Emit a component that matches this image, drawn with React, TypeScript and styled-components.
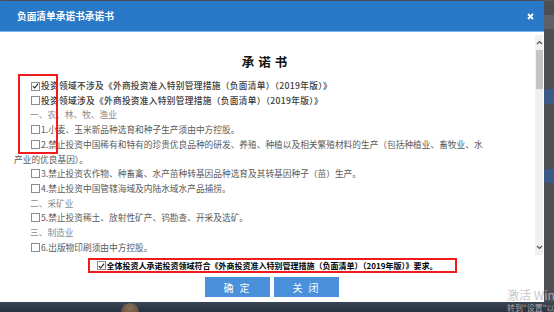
import React from 'react';
import styled, { createGlobalStyle } from 'styled-components';

const Global = createGlobalStyle`
  html, body { margin: 0; padding: 0; width: 554px; height: 312px; overflow: hidden; background: #4a4c50; }
  body { font-family: "Noto Sans CJK SC", "Noto Sans", sans-serif; }
  * { box-sizing: border-box; }
`;

const Screen = styled.div`
  position: relative;
  width: 554px;
  height: 312px;
  display: flex;
  flex-direction: column;
  overflow: hidden;
  background: #4a4c50;
`;

const TopEdge = styled.div`
  height: 1px;
  background: #5b5d61;
`;

const Middle = styled.div`
  display: flex;
  height: 301px;
`;

const Dialog = styled.div`
  width: 544px;
  display: flex;
  flex-direction: column;
  background: #ffffff;
  box-shadow: 0 0 4px rgba(0, 0, 0, 0.4);
`;

const Header = styled.div`
  height: 31px;
  flex: none;
  display: flex;
  align-items: center;
  justify-content: space-between;
  padding: 0 10px 0 17px;
  background: #2a79c9;
  border-bottom: 1px solid #7ab2ea;
`;

const Title = styled.div`
  color: #ffffff;
  font-size: 9.7px;
  font-weight: 700;
`;

const CloseButton = styled.div`
  width: 8px;
  height: 8px;
  display: flex;
  align-items: center;
  justify-content: center;
`;

const Main = styled.div`
  height: 223px;
  display: flex;
  flex: none;
`;

const Content = styled.div`
  position: relative;
  flex: 1;
  overflow: hidden;
  padding: 22px 40px 0 14px;
`;

const Heading = styled.div`
  text-align: center;
  font-size: 12.5px;
  line-height: 16px;
  font-weight: 700;
  letter-spacing: 4px;
  color: #111;
  margin: 0 0 9px 24px;
`;

const Line = styled.div<{ $tone: 'strong' | 'item' | 'cat' }>`
  font-size: 8.7px;
  line-height: 14.7px;
  white-space: nowrap;
  text-indent: ${(p) => (p.$tone === 'cat' ? '16px' : '17px')};
  letter-spacing: ${(p) => (p.$tone === 'strong' ? '0.3px' : '0')};
  color: ${(p) => (p.$tone === 'strong' ? '#3a3a3a' : p.$tone === 'cat' ? '#8a8a8a' : '#5a5a5a')};
  font-weight: ${(p) => (p.$tone === 'strong' ? 500 : 400)};
`;

const Box = styled.span<{ $size?: number }>`
  display: inline-flex;
  align-items: center;
  justify-content: center;
  text-indent: 0;
  width: ${(p) => p.$size ?? 9}px;
  height: ${(p) => p.$size ?? 9}px;
  border: 1px solid #8c8c8c;
  background: #fff;
  vertical-align: -1px;
  margin-right: 1px;
`;

const Annotation = styled.div`
  position: absolute;
  left: 18px;
  top: 42px;
  width: 40px;
  height: 80px;
  border: 2px solid #ee1c1c;
  pointer-events: none;
`;

const Scrollbar = styled.div`
  width: 8px;
  margin: 3px 1px 0 0;
  background: #f0f0f0;
  display: flex;
  flex-direction: column;
  align-items: center;
`;

const ScrollArrow = styled.div`
  height: 15px;
  width: 8px;
  display: flex;
  align-items: center;
  justify-content: center;
`;

const Thumb = styled.div`
  width: 7px;
  height: 39px;
  background: #c4c4c4;
`;

const Spacer = styled.div`
  flex: 1;
`;

const Footer = styled.div`
  display: flex;
  flex-direction: column;
  align-items: center;
  padding-top: 3px;
  gap: 4px;
`;

const Agreement = styled.div`
  width: 369px;
  height: 15px;
  border: 2px solid #ee1c1c;
  display: flex;
  align-items: center;
  padding-left: 7px;
  font-size: 8px;
  font-weight: 700;
  color: #000;
  white-space: nowrap;
`;

const Buttons = styled.div`
  display: flex;
  gap: 4px;
`;

const Button = styled.div`
  width: 65px;
  height: 20px;
  background: #4a90db;
  color: #fff;
  font-size: 10px;
  letter-spacing: 2px;
  display: flex;
  align-items: center;
  justify-content: center;
`;

const SideStrip = styled.div`
  flex: 1;
  display: flex;
  flex-direction: column;
  background: #4d4f53;
`;

const SidePatch = styled.div<{ $h: number; $c: string; $mt: number }>`
  height: ${(p) => p.$h}px;
  margin-top: ${(p) => p.$mt}px;
  background: ${(p) => p.$c};
`;

const Taskbar = styled.div`
  position: relative;
  flex: 1;
  background: linear-gradient(#3a4656, #27313e);
`;

const Avatar = styled.div`
  position: absolute;
  left: 121px;
  top: 1px;
  width: 18px;
  height: 18px;
  border-radius: 50%;
  background: radial-gradient(circle at 50% 30%, #8a7158, #4c3a2a);
`;

const Watermark = styled.div`
  position: absolute;
  left: 507px;
  top: 287px;
  color: rgba(190, 190, 190, 0.85);
  font-family: "Noto Sans CJK SC", "Noto Sans", sans-serif;
  white-space: nowrap;
`;

const WatermarkBig = styled.div`
  font-size: 12px;
  line-height: 16px;
`;

const WatermarkSmall = styled.div`
  font-size: 8px;
  line-height: 10px;
`;

const Check = () => (
  <svg width="8" height="8" viewBox="0 0 8 8">
    <path d="M1 4.2 L3.1 6.3 L7 1.2" fill="none" stroke="#222" strokeWidth="1.3" />
  </svg>
);

const Chevron = ({ up }: { up?: boolean }) => (
  <svg width="7" height="5" viewBox="0 0 7 5">
    <path d={up ? 'M1 4 L3.5 1.5 L6 4' : 'M1 1 L3.5 3.5 L6 1'} fill="none" stroke="#505050" strokeWidth="1.2" />
  </svg>
);

const items: { tone: 'strong' | 'item' | 'cat'; box?: 'on' | 'off'; text: React.ReactNode }[] = [
  { tone: 'strong', box: 'on', text: '投资领域不涉及《外商投资准入特别管理措施（负面清单）（2019年版）》' },
  { tone: 'strong', box: 'off', text: '投资领域涉及《外商投资准入特别管理措施（负面清单）（2019年版）》' },
  { tone: 'cat', text: '一、农、林、牧、渔业' },
  { tone: 'item', box: 'off', text: '1.小麦、玉米新品种选育和种子生产须由中方控股。' },
  {
    tone: 'item',
    box: 'off',
    text: (
      <>
        2.禁止投资中国稀有和特有的珍贵优良品种的研发、养殖、种植以及相关繁殖材料的生产（包括种植业、畜牧业、水
        <br />
        <span style={{ display: 'inline-block', marginLeft: '-17px' }}>产业的优良基因）。</span>
      </>
    ),
  },
  { tone: 'item', box: 'off', text: '3.禁止投资农作物、种畜禽、水产苗种转基因品种选育及其转基因种子（苗）生产。' },
  { tone: 'item', box: 'off', text: '4.禁止投资中国管辖海域及内陆水域水产品捕捞。' },
  { tone: 'cat', text: '二、采矿业' },
  { tone: 'item', box: 'off', text: '5.禁止投资稀土、放射性矿产、钨勘查、开采及选矿。' },
  { tone: 'cat', text: '三、制造业' },
  { tone: 'item', box: 'off', text: '6.出版物印刷须由中方控股。' },
];

export default function App() {
  return (
    <>
      <Global />
      <Screen>
        <TopEdge />
        <Middle>
          <Dialog>
            <Header>
              <Title>负面清单承诺书承诺书</Title>
              <CloseButton>
                <svg width="7" height="7" viewBox="0 0 7 7">
                  <path d="M1 1 L6 6 M6 1 L1 6" stroke="#fff" strokeWidth="1.8" />
                </svg>
              </CloseButton>
            </Header>
            <Main>
              <Content>
                <Heading>承诺书</Heading>
                {items.map((it, i) => (
                  <Line key={i} $tone={it.tone}>
                    {it.box && <Box>{it.box === 'on' && <Check />}</Box>}
                    {it.text}
                  </Line>
                ))}
                <Annotation />
              </Content>
              <Scrollbar>
                <ScrollArrow>
                  <Chevron up />
                </ScrollArrow>
                <Thumb />
                <Spacer />
                <ScrollArrow>
                  <Chevron />
                </ScrollArrow>
              </Scrollbar>
            </Main>
            <Footer>
              <Agreement>
                <Box>
                  <Check />
                </Box>
                全体投资人承诺投资领域符合《外商投资准入特别管理措施（负面清单）（2019年版）》要求。
              </Agreement>
              <Buttons>
                <Button>确 定</Button>
                <Button>关 闭</Button>
              </Buttons>
            </Footer>
          </Dialog>
          <SideStrip>
            <SidePatch $mt={14} $h={14} $c="#5e6168" />
            <SidePatch $mt={60} $h={15} $c="#3d5a86" />
            <SidePatch $mt={65} $h={14} $c="#3d5a86" />
          </SideStrip>
        </Middle>
        <Taskbar>
          <Avatar />
        </Taskbar>
        <Watermark>
          <WatermarkBig>激活 Windows</WatermarkBig>
          <WatermarkSmall>转到"设置"以激活 Windows。</WatermarkSmall>
        </Watermark>
      </Screen>
    </>
  );
}
